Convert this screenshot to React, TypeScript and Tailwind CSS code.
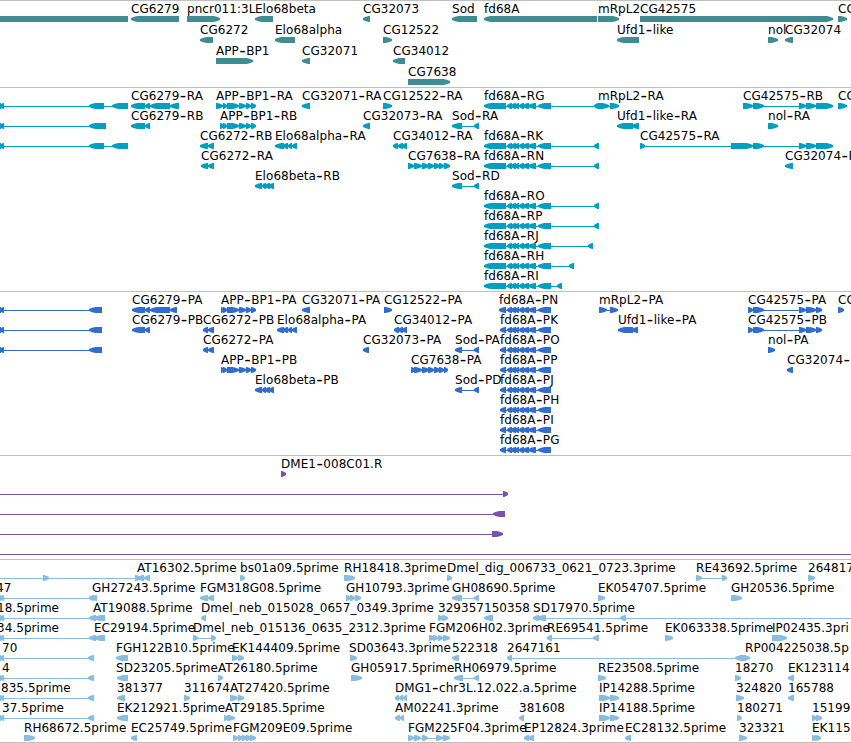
import React from 'react';

type Dir = 'L' | 'R';

interface Feature {
  label?: string;
  dir: Dir;
  exons: number[][];
  labelX?: number;
  // intron line range, when it runs past the exons
  line?: [number, number];
}

interface Track {
  name: string;
  color: string;
  rowClass: string;
  padClass: string;
  rows: Feature[][];
}

const f = (
  label: string,
  dir: Dir,
  exons: number[][],
  labelX?: number,
  line?: [number, number]
): Feature => ({ label, dir, exons, labelX, line });

const EDGE = [[-7, 1], [0, 4]];
const FD_BODY = [[507, 512], [511, 516], [515, 519], [519, 524], [523, 529], [528, 536], [538, 551]];
const APP_TAIL = [[223, 227], [227, 239], [239, 246], [246, 251], [251, 256]];
const CG42575_TAIL = [[753, 764], [799, 806], [806, 816]];
const CG7638_BODY = [[414, 422], [422, 429], [428, 434], [434, 440], [439, 444]];

const fdR = (name: string, end: number) =>
  f(`fd68A-${name}`, 'L', [[484, 506], ...FD_BODY, [end - 5, end]], 484);
const fdP = (name: string, start = 500) =>
  f(`fd68A-${name}`, 'L', [[start, 506], ...FD_BODY], start);

const genes: Feature[][] = [
  [
    f('', 'L', [[-20, 128]]),
    f('CG6279', 'L', [[131, 179]]),
    f('pncr011:3L', 'R', [[187, 220]]),
    f('Elo68beta', 'L', [[255, 273]]),
    f('CG32073', 'L', [[363, 370]]),
    f('Sod', 'L', [[452, 477]]),
    f('fd68A', 'L', [[484, 597]]),
    f('mRpL2', 'R', [[598, 619]]),
    f('CG42575', 'R', [[640, 833]]),
    f('CG', 'R', [[838, 847]]),
  ],
  [
    f('CG6272', 'L', [[200, 213]]),
    f('Elo68alpha', 'L', [[275, 295]]),
    f('CG12522', 'R', [[383, 392]]),
    f('Ufd1-like', 'L', [[617, 639]]),
    f('nol', 'R', [[768, 778]]),
    f('CG32074', 'L', [[785, 793]]),
  ],
  [
    f('APP-BP1', 'R', [[216, 253]]),
    f('CG32071', 'L', [[302, 310]]),
    f('CG34012', 'L', [[393, 405]]),
  ],
  [f('CG7638', 'R', [[408, 450]])],
];

const transcripts: Feature[][] = [
  [
    f('', 'L', [...EDGE, [89, 104], [112, 128]]),
    f('CG6279-RA', 'L', [[131, 145], [145, 150], [150, 170], [170, 179]]),
    f('APP-BP1-RA', 'R', [[216, 223], ...APP_TAIL]),
    f('CG32071-RA', 'L', [[302, 310]]),
    f('CG12522-RA', 'R', [[383, 392]]),
    fdR('RG', 599),
    f('mRpL2-RA', 'R', [[598, 609], [610, 619]]),
    f('CG42575-RB', 'R', [[743, 753], ...CG42575_TAIL, [816, 833]]),
    f('CG', 'R', [[838, 847]]),
  ],
  [
    f('', 'L', [...EDGE, [89, 106]]),
    f('CG6279-RB', 'L', [[131, 145], [145, 150]]),
    f('APP-BP1-RB', 'R', [[220, 224], ...APP_TAIL]),
    f('CG32073-RA', 'L', [[363, 370]]),
    f('Sod-RA', 'L', [[452, 462], [474, 479]]),
    f('Ufd1-like-RA', 'L', [[617, 633], [632, 639]]),
    f('nol-RA', 'R', [[768, 778]]),
  ],
  [
    f('', 'L', [...EDGE, [89, 104], [112, 128]]),
    f('CG6272-RB', 'L', [[200, 208], [208, 214]]),
    f('Elo68alpha-RA', 'L', [[275, 284], [283, 288], [288, 292], [292, 297]]),
    f('CG34012-RA', 'L', [[393, 398], [398, 403], [402, 407]]),
    fdR('RK', 599),
    f('CG42575-RA', 'R', [[640, 645], [731, 753], ...CG42575_TAIL, [816, 833]]),
  ],
  [
    f('CG6272-RA', 'L', [[201, 208], [208, 214]]),
    f('CG7638-RA', 'R', [[408, 414], ...CG7638_BODY, [444, 450]]),
    fdR('RN', 599),
    f('CG32074-R', 'L', [[785, 793]]),
  ],
  [
    f('Elo68beta-RB', 'L', [[255, 262], [262, 266], [265, 270], [269, 274]]),
    f('Sod-RD', 'L', [[452, 462], [474, 479]]),
  ],
  [fdR('RO', 599)],
  [fdR('RP', 599)],
  [fdR('RJ', 593)],
  [fdR('RH', 574)],
  [fdR('RI', 562)],
];

const proteins: Feature[][] = [
  [
    f('', 'L', [...EDGE, [89, 102]]),
    f('CG6279-PA', 'L', [[132, 145], [145, 150], [150, 170], [170, 177]]),
    f('APP-BP1-PA', 'R', [[221, 224], ...APP_TAIL]),
    f('CG32071-PA', 'L', [[302, 310]]),
    f('CG12522-PA', 'R', [[384, 392]]),
    fdP('PN', 499),
    f('mRpL2-PA', 'R', [[599, 607], [610, 618]]),
    f('CG42575-PA', 'R', [[748, 753], ...CG42575_TAIL, [816, 822]]),
    f('CG', 'R', [[838, 844]]),
  ],
  [
    f('', 'L', [...EDGE, [89, 102]]),
    f('CG6279-PB', 'L', [[132, 145], [145, 150]]),
    f('CG6272-PB', 'L', [[203, 208], [208, 214]]),
    f('Elo68alpha-PA', 'L', [[277, 284], [283, 288], [288, 292], [292, 297]]),
    f('CG34012-PA', 'L', [[394, 399], [398, 403], [402, 407]]),
    fdP('PK'),
    f('Ufd1-like-PA', 'L', [[618, 633], [632, 638]]),
    f('CG42575-PB', 'R', [[748, 753], ...CG42575_TAIL, [816, 822]]),
  ],
  [
    f('', 'L', [...EDGE, [89, 102]]),
    f('CG6272-PA', 'L', [[203, 208], [208, 214]]),
    f('CG32073-PA', 'L', [[363, 369]]),
    f('Sod-PA', 'L', [[455, 462], [474, 479]]),
    fdP('PO'),
    f('nol-PA', 'R', [[768, 775]]),
  ],
  [
    f('APP-BP1-PB', 'R', [[221, 224], ...APP_TAIL]),
    f('CG7638-PA', 'R', [[411, 415], ...CG7638_BODY, [444, 448]]),
    fdP('PP'),
    f('CG32074-', 'L', [[787, 793]]),
  ],
  [
    f('Elo68beta-PB', 'L', [[255, 262], [262, 266], [265, 270], [269, 274]]),
    f('Sod-PD', 'L', [[455, 462], [474, 479]]),
    fdP('PJ'),
  ],
  [fdP('PH')],
  [fdP('PI')],
  [fdP('PG')],
];

const clones: Feature[][] = [
  [f('DME1-008C01.R', 'R', [[281, 286]])],
  [f('', 'R', [[503, 508]], 0, [0, 505])],
  [f('', 'L', [[493, 505]], 0, [0, 500])],
  [f('', 'R', [[492, 503]], 0, [0, 500])],
  [f('', 'R', [], 0, [0, 851])],
];

const ests: Feature[][] = [
  [
    f('', 'R', [[43, 49], [135, 141]], 0, [0, 140]),
    f('AT16302.5prime', 'L', [[137, 144], [144, 150]]),
    f('bs01a09.5prime', 'R', [[240, 245]]),
    f('RH18418.3prime', 'R', [[344, 355]]),
    f('Dmel_dig_006733_0621_0723.3prime', 'R', [[447, 452]]),
    f('RE43692.5prime', 'R', [[696, 702], [722, 727]]),
    f('264817', 'R', [[808, 815]]),
  ],
  [
    f('47', 'L', [...EDGE], -4),
    f('GH27243.5prime', 'L', [[89, 94], [92, 97]], 92, [0, 97]),
    f('FGM318G08.5prime', 'L', [[200, 208], [208, 214]]),
    f('GH10793.3prime', 'R', [[346, 351], [350, 355], [355, 361]]),
    f('GH08690.5prime', 'L', [[452, 462], [474, 479]]),
    f('EK054707.5prime', 'R', [[598, 605]]),
    f('GH20536.5prime', 'R', [[731, 742]]),
  ],
  [
    f('18.5prime', 'L', [...EDGE], -3),
    f('AT19088.5prime', 'L', [[89, 96], [94, 105]], 93, [0, 105]),
    f('Dmel_neb_015028_0657_0349.3prime', 'L', [[201, 206]]),
    f('329357', 'R', [[438, 443], [442, 448]]),
    f('150358', 'L', [[484, 493]]),
    f('SD17970.5prime', 'L', [[533, 539], [537, 546], [620, 626]], 533, [533, 851]),
  ],
  [
    f('34.5prime', 'L', [...EDGE], -3),
    f('EC29194.5prime', 'L', [[89, 96], [94, 105]], 94, [0, 105]),
    f('Dmel_neb_015136_0635_2312.3prime', 'R', [[193, 198], [211, 216]]),
    f('FGM206H02.3prime', 'R', [[429, 434], [433, 438], [438, 443], [443, 450]]),
    f('RE69541.5prime', 'L', [[547, 552], [593, 599]]),
    f('EK063338.5prime', 'R', [[665, 673]]),
    f('IP02435.3pri', 'R', [[772, 787]]),
  ],
  [
    f('70', 'L', [...EDGE, [88, 94]], 2),
    f('FGH122B10.5prime', 'L', [[116, 128]]),
    f('EK144409.5prime', 'R', [[232, 238], [238, 244]]),
    f('SD03643.3prime', 'R', [[350, 357]], 349),
    f('522318', 'L', [[452, 459]]),
    f('2647161', 'L', [[507, 512], [735, 746]]),
    f('RP004225038.5p', 'R', [[740, 750]], 745),
  ],
  [
    f('4', 'L', [...EDGE, [88, 94]], 2),
    f('SD23205.5prime', 'L', [[117, 128]], 116),
    f('AT26180.5prime', 'R', [[218, 223]]),
    f('GH05917.5prime', 'R', [[351, 362]]),
    f('RH06979.5prime', 'L', [[454, 463], [474, 479]]),
    f('RE23508.5prime', 'R', [[598, 606]]),
    f('18270', 'R', [[735, 741]]),
    f('EK123114', 'L', [[788, 794]]),
  ],
  [
    f('835.5prime', 'L', [...EDGE, [88, 94]], 1),
    f('381377', 'L', [[117, 125]]),
    f('311674', 'R', [[184, 190]]),
    f('AT27420.5prime', 'R', [[230, 238], [238, 244]]),
    f('DMG1-chr3L.12.022.a.5prime', 'L', [[395, 399], [399, 403], [403, 407]]),
    f('IP14288.5prime', 'R', [[599, 610], [610, 619]]),
    f('324820', 'R', [[736, 744]]),
    f('165788', 'L', [[788, 794]]),
  ],
  [
    f('37.5prime', 'L', [...EDGE, [88, 94]], 2),
    f('EK212921.5prime', 'L', [[117, 128]]),
    f('AT29185.5prime', 'R', [[224, 228], [227, 235]], 225),
    f('AM02241.3prime', 'L', [[395, 400], [400, 404]]),
    f('381608', 'L', [[519, 524]]),
    f('IP14188.5prime', 'R', [[599, 610], [610, 619]]),
    f('180271', 'R', [[737, 742]]),
    f('15199', 'R', [[812, 817], [816, 822]]),
  ],
  [
    f('RH68672.5prime', 'R', [[24, 35]]),
    f('EC25749.5prime', 'L', [[131, 137]]),
    f('FGM209E09.5prime', 'R', [[233, 238], [238, 243], [242, 247], [246, 251], [250, 256]]),
    f('FGM225F04.3prime', 'R', [[408, 414], [414, 421], [422, 428], [436, 443], [443, 450]]),
    f('EP12824.3prime', 'L', [[524, 529], [528, 534]]),
    f('EC28132.5prime', 'L', [[625, 631]]),
    f('323321', 'R', [[739, 747]]),
    f('EK115', 'R', [[812, 817], [815, 821]]),
  ],
];

const tracks: Track[] = [
  { name: 'genes', color: '#408c93', rowClass: 'h-[21px]', padClass: 'pb-[3px]', rows: genes },
  { name: 'transcripts', color: '#009ebf', rowClass: 'h-5', padClass: 'pb-1', rows: transcripts },
  { name: 'proteins', color: '#316dce', rowClass: 'h-5', padClass: 'pb-1', rows: proteins },
  { name: 'clones', color: '#7753ab', rowClass: 'h-5', padClass: 'pb-1', rows: clones },
  { name: 'ests', color: '#89bddf', rowClass: 'h-5', padClass: 'pb-[3px]', rows: ests },
];

// blunt arrow: a two pixel tip that widens to the full bar height
const arrow = (dir: Dir, x1: number, x2: number) => {
  const head = Math.min(8, x2 - x1);
  const s = dir === 'L' ? 1 : -1;
  const tip = dir === 'L' ? x1 : x2;
  const base = dir === 'L' ? x2 : x1;
  const mid = tip + s * head * 0.4;
  const full = tip + s * head * 0.8;
  return `M${tip} 2.1L${mid} 0.7L${full} 0H${base}V6H${full}L${mid} 5.3L${tip} 4Z`;
};

const Glyph: React.FC<{ feature: Feature }> = ({ feature }) => {
  const { dir, exons, line } = feature;
  const start = line ? line[0] : exons[0][0];
  const end = line ? line[1] : exons[exons.length - 1][1];

  return (
    <g>
      <rect x={start} y={3} width={end - start} height={1} shapeRendering="crispEdges" />
      {exons.map(([x1, x2], i) => (
        <path key={i} d={arrow(dir, x1, x2)} />
      ))}
    </g>
  );
};

// hyphens are drawn as long dashes
const Label: React.FC<{ text: string }> = ({ text }) => (
  <>
    {text.split('-').map((part, i) => (
      <React.Fragment key={i}>
        {i > 0 && <span className="text-[18px] leading-[0] align-[-1px] px-[0.4px]">-</span>}
        {part}
      </React.Fragment>
    ))}
  </>
);

const TrackRow: React.FC<{ features: Feature[]; className: string }> = ({ features, className }) => (
  <div className={`relative shrink-0 pt-4 ${className}`}>
    <svg width="851" height="6" viewBox="0 0 851 6" fill="currentColor" className="block">
      {features.map((feature, i) => (
        <Glyph key={i} feature={feature} />
      ))}
    </svg>
    {features.map(
      (feature, i) =>
        feature.label && (
          <span
            key={i}
            className="absolute top-[2px] text-[12px] leading-[14px] tracking-[0.04px] whitespace-nowrap text-black"
            style={{ left: feature.labelX ?? feature.exons[0][0] }}
          >
            <Label text={feature.label} />
          </span>
        )
    )}
  </div>
);

const App: React.FC = () => (
  <main className="w-[851px] h-[743px] overflow-hidden bg-white font-['DejaVu_Sans',sans-serif] border-b border-[#c0c0c0]">
    {tracks.map((track) => (
      <section
        key={track.name}
        className={`relative flex flex-col ${track.padClass}`}
        style={{ color: track.color }}
      >
        <div className="absolute inset-x-0 top-0 h-px bg-[#c0c0c0]" />
        {track.rows.map((row, i) => (
          <TrackRow key={i} features={row} className={track.rowClass} />
        ))}
      </section>
    ))}
  </main>
);

export default App;
